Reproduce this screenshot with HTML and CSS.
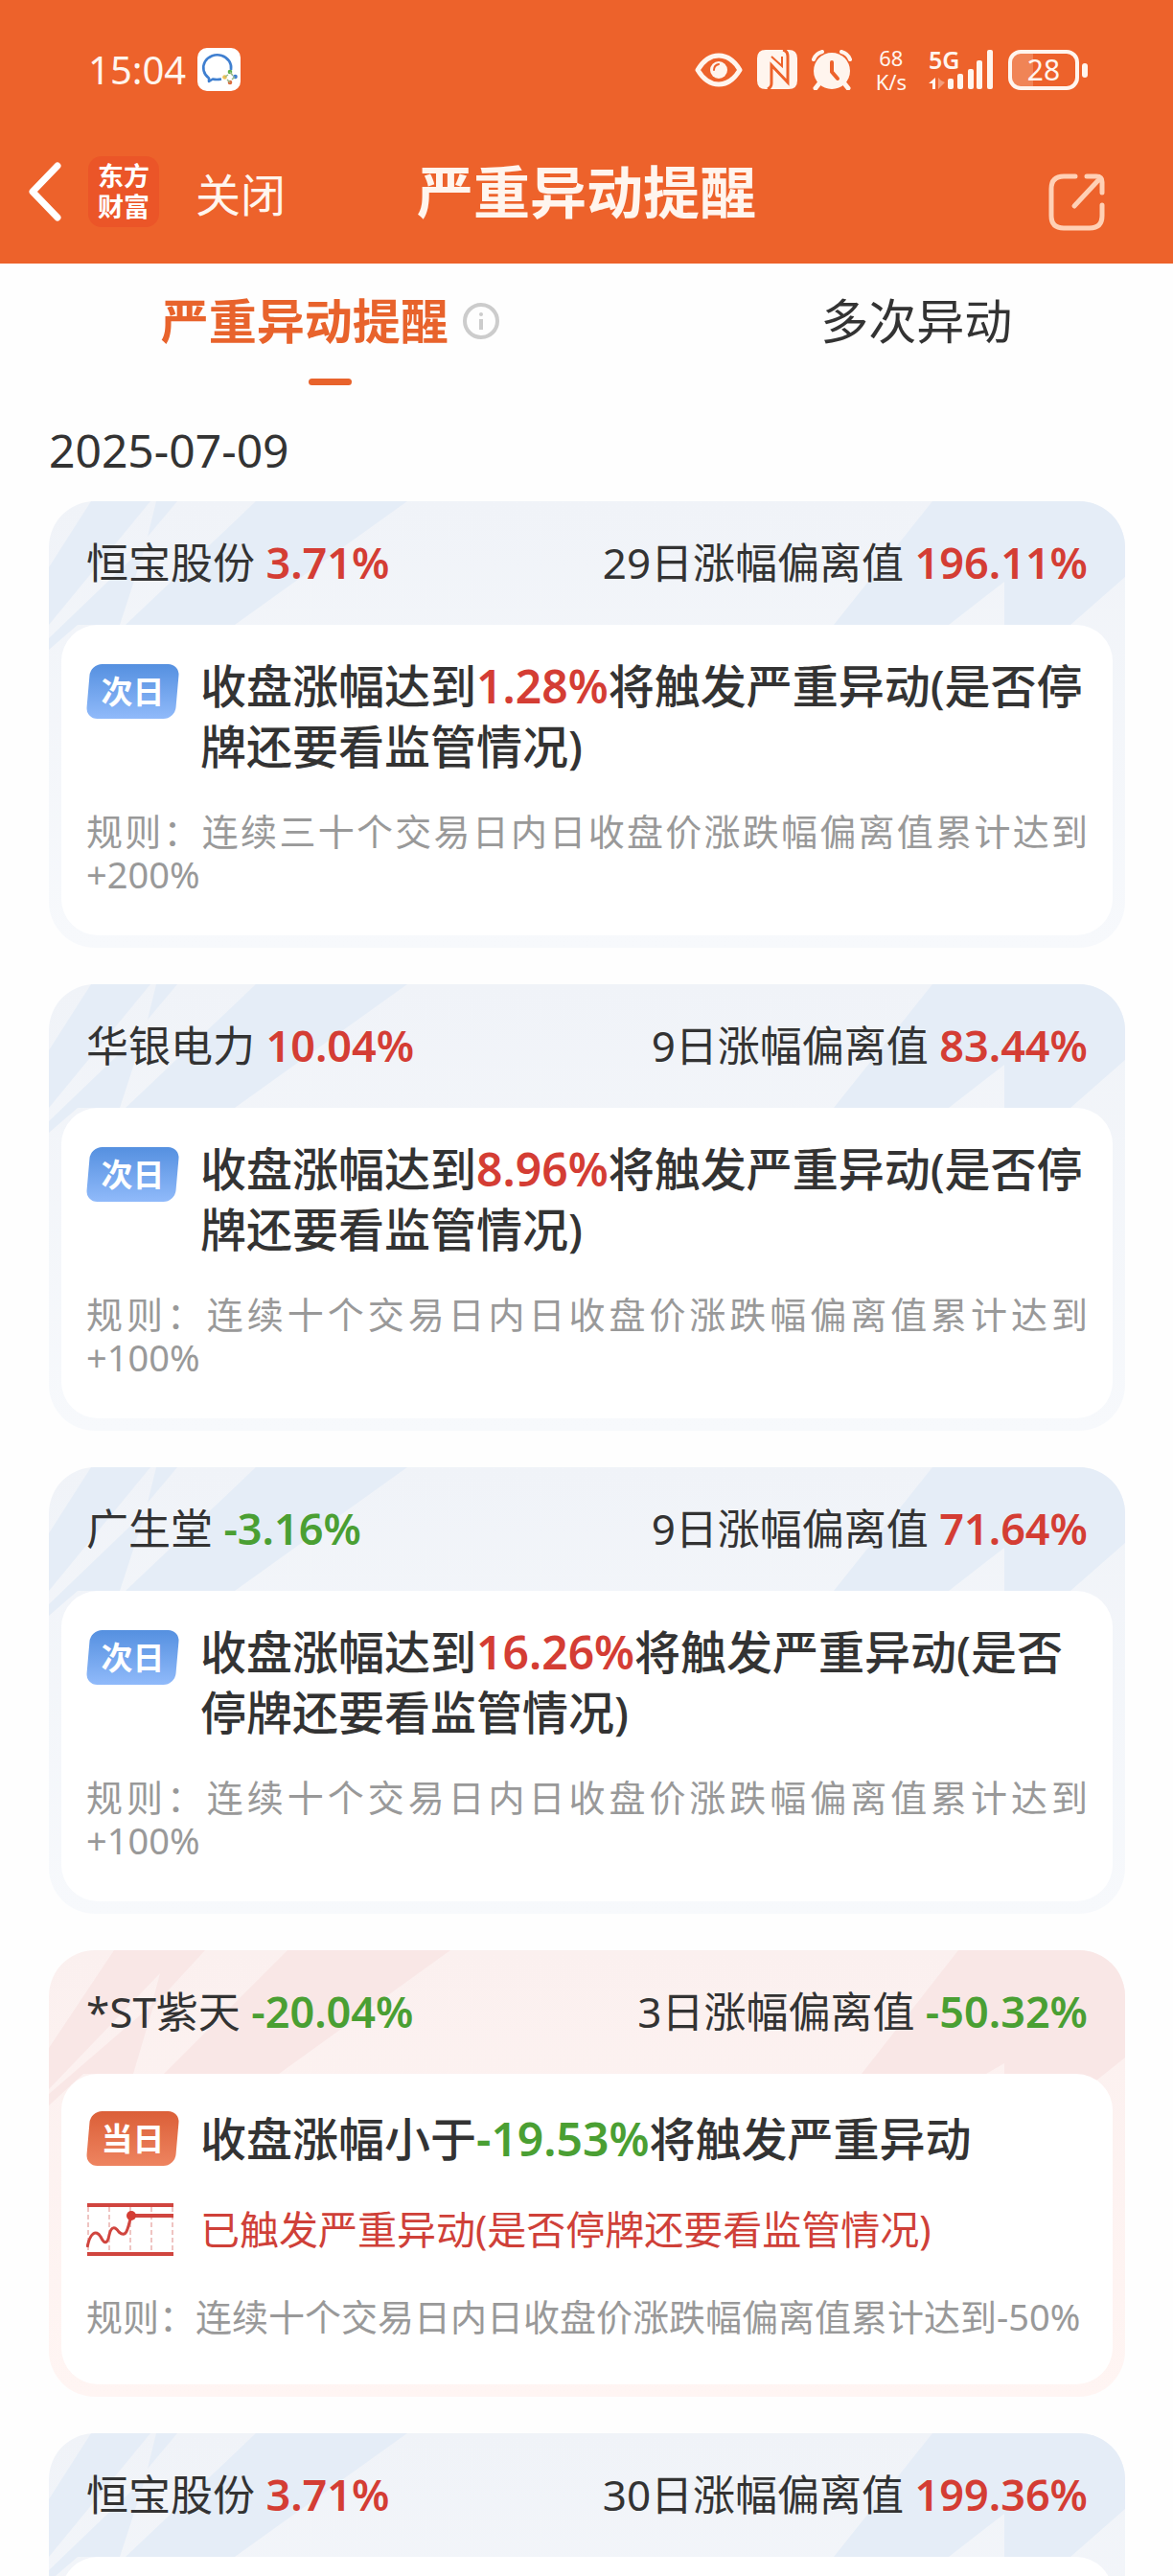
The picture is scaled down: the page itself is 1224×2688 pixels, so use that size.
FILE: index.html
```html
<!DOCTYPE html>
<html lang="zh-CN">
<head>
  <meta charset="UTF-8" />
  <meta name="viewport" content="width=device-width, initial-scale=1" />
  <title>严重异动提醒</title>
  <link rel="stylesheet" href="styles.css">
</head>
<body>
  <!-- shared shapes for the card headers -->
  <svg class="defs" aria-hidden="true">
    <symbol id="streaks-left" viewBox="0 0 440 180">
      <path d="M44 0H106L0 129V69Z" />
      <path d="M112 0H134L103 37Z" />
      <path d="M101 46L0 143V155L30 129H74Z" />
      <path d="M216 0H374L194 129H80Z" />
    </symbol>
    <symbol id="streaks-left-red" viewBox="0 0 440 180">
      <path d="M68 0H163L106 62L116 24L0 145V102Z" />
      <path d="M110 55L0 150V162L36 129H88Z" />
      <path d="M249 0H419L240 129H120Z" />
    </symbol>
    <symbol id="streaks-right" viewBox="0 0 400 180">
      <path d="M199 0H400V79L343 129H274V84L216 129H96Z" />
    </symbol>
    <symbol id="streaks-right-red" viewBox="0 0 400 180">
      <path d="M226 0H400V112L370 136H274V118L255 129H125Z" />
    </symbol>
  </svg>

  <header class="header">
    <div class="status">
      <div class="status-left">
        <span class="time">15:04</span>
        <svg width="45" height="45" viewBox="0 0 45 45">
          <rect width="45" height="45" rx="10" fill="#fff" />
          <path d="M35 23A14.500 13.500 0 1 0 12 31.500L12 35L16 32.500Q20 33.500 25 32.500" fill="none" stroke="#3f7fd0" stroke-width="2.600" stroke-linejoin="round" />
          <path d="M31 27L34 24L39 29L34 36L29 31Z" fill="#fff" />
          <circle cx="34" cy="25" r="2.300" fill="#5ab04a" />
          <circle cx="39.500" cy="30" r="2.300" fill="#3f7fd0" />
          <circle cx="34" cy="36" r="2.300" fill="#dc6a3c" />
          <circle cx="28.500" cy="30.500" r="2.300" fill="#eac057" />
          <path d="M34 25L37 29M39 30L36 33M34 36L31 33M29 30L32 28" stroke-width="1.500" stroke="#9bb98a" />
        </svg>
      </div>
      <div class="status-right">
        <svg width="50" height="38" viewBox="0 0 50 38">
          <path d="M3 19C9 9 17 4 25 4S41 9 47 19C41 29 33 34 25 34S9 29 3 19Z" fill="none" stroke="#fff5ee" stroke-width="5" stroke-linejoin="round" />
          <circle cx="25" cy="19" r="9" fill="#fff5ee" />
          <path d="M20 19Q20 14 25 13" fill="none" stroke="#ed622b" stroke-width="2" stroke-linecap="round" />
        </svg>
        <svg width="42" height="42" viewBox="0 0 42 42">
          <path d="M9 0H33Q42 0 42 9V32Q42 41 33 41H9Q0 41 0 32V9Q0 0 9 0Z" fill="#fff5ee" />
          <path d="M27 0Q32 1 32 7V34L15 16V35Q15 39 11 41" fill="none" stroke="#ed622b" stroke-width="3" />
          <path d="M15 7L26 17V7" fill="none" stroke="#ed622b" stroke-width="2" />
        </svg>
        <svg width="42" height="42" viewBox="0 0 42 42">
          <circle cx="21" cy="22" r="19" fill="#fff5ee" />
          <path d="M8 35L4 40M34 35L38 40" stroke="#fff5ee" stroke-width="5" stroke-linecap="round" />
          <path d="M2 10Q4 4 11 2M40 10Q38 4 31 2" fill="none" stroke="#fff5ee" stroke-width="4" stroke-linecap="round" />
          <path d="M21 13V23L27 30" fill="none" stroke="#ed622b" stroke-width="4" stroke-linecap="round" stroke-linejoin="round" />
        </svg>
        <span class="net-speed"><span>68</span><span>K/s</span></span>
        <span class="signal">
          <svg width="68" height="42" viewBox="0 0 68 42" fill="#fff5ee">
            <path d="M7 29V41H4V35H0Z" />
            <path d="M10 29V41L17 34L13 32Z" opacity=".4" />
            <rect x="20" y="30" width="6" height="11" rx="2" />
            <rect x="30" y="25" width="6" height="16" rx="2" />
            <rect x="41" y="20" width="6" height="21" rx="2" />
            <rect x="50" y="11" width="6" height="30" rx="2" />
            <rect x="61" y="0" width="6" height="41" rx="2" />
          </svg>
          <span class="signal-type">5G</span>
        </span>
        <span class="battery"><span class="battery-level">28</span></span>
      </div>
    </div>

    <nav class="nav">
      <div class="nav-left">
        <button type="button" aria-label="返回">
          <svg width="36" height="62" viewBox="0 0 36 62"><path d="M31 4L5 31L31 58" fill="none" stroke="#fff" stroke-width="7" stroke-linecap="round" stroke-linejoin="round" /></svg>
        </button>
        <a class="logo" href="#">东方<br>财富</a>
        <button class="close" type="button">关闭</button>
      </div>
      <h1 class="title">严重异动提醒</h1>
      <div class="nav-right">
        <button type="button" aria-label="分享">
          <svg width="60" height="60" viewBox="0 0 60 60"><path d="M28 3H16Q3 3 3 16V44Q3 57 16 57H43Q56 57 56 44V33M40 3H50Q56 3 56 9V20M54 5L27 34" fill="none" stroke="#ffd0b5" stroke-width="5" stroke-linecap="round" /></svg>
        </button>
      </div>
    </nav>
  </header>

  <div class="tabs">
    <button class="tab active" type="button">
      <span class="tab-label">严重异动提醒
        <svg width="38" height="38" viewBox="0 0 38 38"><circle cx="19" cy="19" r="17" fill="none" stroke="#ccc" stroke-width="4" /><circle cx="19" cy="12" r="2" fill="#ccc" /><path d="M19 17V28" stroke="#ccc" stroke-width="4" /></svg>
      </span>
    </button>
    <button class="tab" type="button"><span class="tab-label">多次异动</span></button>
  </div>

  <main class="list">
    <h2 class="date">2025-07-09</h2>

    <article class="card">
      <svg class="streaks left"><use href="#streaks-left" /></svg>
      <svg class="streaks right"><use href="#streaks-right" /></svg>
      <div class="card-head">
        <span>恒宝股份 <b class="up">3.71%</b></span>
        <span>29日涨幅偏离值 <b class="up">196.11%</b></span>
      </div>
      <div class="card-body">
        <div class="row">
          <span class="badge">次日</span>
          <p class="headline">收盘涨幅达到<b class="up">1.28%</b>将触发严重异动(是否停牌还要看监管情况)</p>
        </div>
        <p class="rule">规则：连续三十个交易日内日收盘价涨跌幅偏离值累计达到+200%</p>
      </div>
    </article>

    <article class="card">
      <svg class="streaks left"><use href="#streaks-left" /></svg>
      <svg class="streaks right"><use href="#streaks-right" /></svg>
      <div class="card-head">
        <span>华银电力 <b class="up">10.04%</b></span>
        <span>9日涨幅偏离值 <b class="up">83.44%</b></span>
      </div>
      <div class="card-body">
        <div class="row">
          <span class="badge">次日</span>
          <p class="headline">收盘涨幅达到<b class="up">8.96%</b>将触发严重异动(是否停牌还要看监管情况)</p>
        </div>
        <p class="rule">规则：连续十个交易日内日收盘价涨跌幅偏离值累计达到+100%</p>
      </div>
    </article>

    <article class="card">
      <svg class="streaks left"><use href="#streaks-left" /></svg>
      <svg class="streaks right"><use href="#streaks-right" /></svg>
      <div class="card-head">
        <span>广生堂 <b class="down">-3.16%</b></span>
        <span>9日涨幅偏离值 <b class="up">71.64%</b></span>
      </div>
      <div class="card-body">
        <div class="row">
          <span class="badge">次日</span>
          <p class="headline">收盘涨幅达到<b class="up">16.26%</b>将触发严重异动(是否停牌还要看监管情况)</p>
        </div>
        <p class="rule">规则：连续十个交易日内日收盘价涨跌幅偏离值累计达到+100%</p>
      </div>
    </article>

    <article class="card today">
      <svg class="streaks left"><use href="#streaks-left-red" /></svg>
      <svg class="streaks right"><use href="#streaks-right-red" /></svg>
      <div class="card-head">
        <span>*ST紫天 <b class="down">-20.04%</b></span>
        <span>3日涨幅偏离值 <b class="down">-50.32%</b></span>
      </div>
      <div class="card-body">
        <div class="row">
          <span class="badge">当日</span>
          <p class="headline">收盘涨幅小于<b class="down">-19.53%</b>将触发严重异动</p>
        </div>
        <div class="row">
          <svg class="trend" width="92" height="57" viewBox="0 0 92 57" fill="none">
            <path d="M2 5V54M24 5V54M46 5V54M68 5V54M90 5V54" stroke="#efc4c2" stroke-width="2" stroke-dasharray="5 3" />
            <path d="M1 3H91M1 54H91M47 14H91" stroke="#d0453f" stroke-width="4" />
            <path d="M1 47C4 32 10 28 15 36C19 44 22 44 24 34C26 25 30 25 34 31C40 36 42 32 44 25L47 14" stroke="#d0453f" stroke-width="3" />
            <circle cx="47" cy="14" r="5" fill="#d43d34" />
          </svg>
          <p class="triggered">已触发严重异动(是否停牌还要看监管情况)</p>
        </div>
        <p class="rule">规则：连续十个交易日内日收盘价涨跌幅偏离值累计达到-50%</p>
      </div>
    </article>

    <article class="card">
      <svg class="streaks left"><use href="#streaks-left" /></svg>
      <svg class="streaks right"><use href="#streaks-right" /></svg>
      <div class="card-head">
        <span>恒宝股份 <b class="up">3.71%</b></span>
        <span>30日涨幅偏离值 <b class="up">199.36%</b></span>
      </div>
      <div class="card-body"></div>
    </article>
  </main>
</body>
</html>
```

FILE: styles.css
```css
* {
  box-sizing: border-box;
}

body {
  display: flex;
  flex-direction: column;
  height: 100vh;
  margin: 0;
  overflow: hidden;
  background: #fefefe;
  color: #333;
  font-family: "Noto Sans", "Noto Sans CJK SC", sans-serif;
  font-size: 44px;
}

button {
  padding: 0;
  border: none;
  background: none;
  color: inherit;
  font: inherit;
  cursor: pointer;
}

h1, h2, p {
  margin: 0;
  font-weight: 400;
}

svg {
  display: block;
  flex-shrink: 0;
}

.defs {
  position: absolute;
  width: 0;
  height: 0;
}

/* header */
.header {
  flex-shrink: 0;
  background: #ed622b;
  color: #fff5ee;
}

.status {
  display: flex;
  justify-content: space-between;
  padding: 50px 88px 30px 92px;
}

.status-left,
.status-right {
  display: flex;
  align-items: center;
  height: 45px;
}

.status-left {
  gap: 12px;
}

.status-right {
  gap: 15px;
}

.time {
  font-size: 40px;
}

.net-speed {
  display: flex;
  flex-direction: column;
  align-items: center;
  margin: 0 8px 0 10px;
  font-size: 22px;
  line-height: 25px;
}

.signal {
  position: relative;
}

.signal-type {
  position: absolute;
  top: -4px;
  left: 0;
  font-size: 25px;
  font-weight: 600;
  line-height: 28px;
}

.battery {
  position: relative;
  width: 74px;
  height: 42px;
  margin-right: 10px;
  border: 4px solid #fff5ee;
  border-radius: 13px;
  background: linear-gradient(to right, #f08456 22px, transparent 22px);
  text-align: center;
}

.battery::after {
  content: "";
  position: absolute;
  top: 10px;
  right: -13px;
  width: 6px;
  height: 15px;
  border-radius: 3px;
  background: #fff5ee;
}

.battery-level {
  display: block;
  font-size: 30px;
  line-height: 34px;
}

.nav {
  display: grid;
  grid-template-columns: 1fr auto 1fr;
  align-items: center;
  height: 150px;
  padding: 0 29px;
}

.nav-left {
  display: flex;
  align-items: center;
}

.nav-right {
  display: flex;
  justify-content: flex-end;
  padding: 22px 41px 0 0;
}

.logo {
  width: 74px;
  margin: 0 38px 0 27px;
  padding: 5px 0;
  border-radius: 14px;
  background: #eb5528;
  color: #fff;
  font-size: 27px;
  font-weight: 700;
  line-height: 32px;
  text-align: center;
  text-decoration: none;
}

.close {
  font-size: 47px;
}

.title {
  font-size: 59px;
  font-weight: 600;
  line-height: 72px;
}

/* tabs */
.tabs {
  display: flex;
  flex-shrink: 0;
  justify-content: space-around;
  padding-top: 30px;
}

.tab {
  display: flex;
  flex-direction: column;
  align-items: center;
  gap: 30px;
  font-size: 50px;
  line-height: 60px;
}

.tab-label {
  display: flex;
  align-items: center;
  gap: 15px;
}

.tab.active {
  color: #e8632c;
  font-weight: 700;
}

.tab::after {
  content: "";
  width: 45px;
  height: 7px;
  border-radius: 4px;
}

.tab.active::after {
  background: #e8632c;
}

/* list */
.list {
  flex: 1;
  min-height: 0;
  overflow-y: auto;
  padding: 35px 50px 0 51px;
  scrollbar-width: none;
}

.date {
  margin-bottom: 20px;
  font-size: 48px;
  line-height: 66px;
}

.card {
  position: relative;
  margin-bottom: 38px;
  padding: 0 13px 13px;
  overflow: hidden;
  border-radius: 48px;
  background: linear-gradient(#f0f3f8, #f7f9fc);
}

.card.today {
  background: linear-gradient(#fbf0ef, #fff5f3);
}

.streaks {
  position: absolute;
  top: 0;
  height: 180px;
  fill: #e5edf7;
}

.today .streaks {
  fill: #f9e7e6;
}

.streaks.left {
  left: 0;
  width: 440px;
}

.streaks.right {
  right: 0;
  width: 400px;
}

.card-head {
  position: relative;
  display: flex;
  align-items: center;
  justify-content: space-between;
  height: 129px;
  padding: 0 26px 6px;
  white-space: nowrap;
}

.card-head b {
  font-size: 45px;
  font-weight: 600;
}

.card-body {
  position: relative;
  min-height: 324px;
  padding: 32px 26px 41px;
  border-radius: 38px;
  background: #fff;
}

.row {
  display: flex;
  align-items: flex-start;
  margin-bottom: 35px;
}

.badge {
  position: relative;
  flex-shrink: 0;
  width: 97px;
  margin: 9px 22px 0 0;
  color: #fff;
  font-size: 33px;
  font-weight: 700;
  line-height: 57px;
  text-align: center;
  z-index: 0;
}

.badge::before {
  content: "";
  position: absolute;
  inset: 0 2px;
  z-index: -1;
  border-radius: 12px;
  background: linear-gradient(#5590e0, #90bafa);
  transform: skewX(-5deg);
}

.today .badge::before {
  background: linear-gradient(#db5f38, #ee8460);
}

.headline {
  font-size: 48px;
  font-weight: 500;
  line-height: 63px;
}

.headline b {
  font-weight: 600;
}

.up {
  color: #d43d34;
}

.down {
  color: #4a9f33;
}

.rule {
  color: #999;
  font-size: 38px;
  line-height: 45px;
  text-align: justify;
}

.today .card-body {
  padding: 36px 26px 36px;
}

.today .row {
  align-items: center;
}

.today .row + .rule {
  padding-top: 5px;
}

.today .badge {
  margin-top: 0;
}

.trend {
  margin-right: 27px;
}

.triggered {
  color: #cf4038;
  font-size: 41px;
  line-height: 57px;
}
```
